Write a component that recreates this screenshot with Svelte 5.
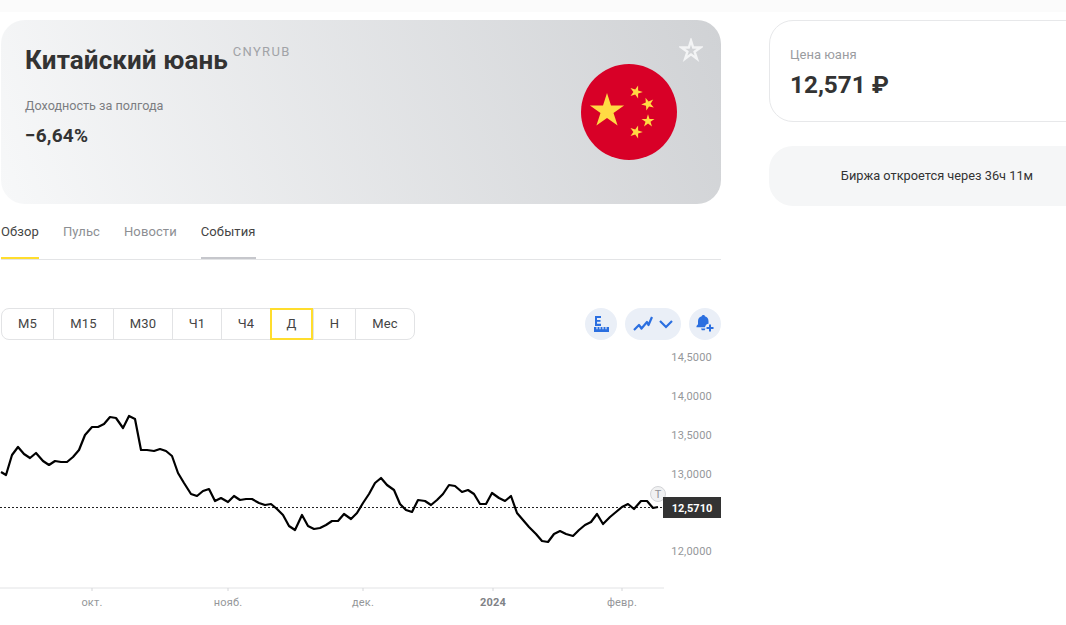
<script lang="ts">
  const tabs = [
    { label: 'Обзор', state: 'active' },
    { label: 'Пульс', state: '' },
    { label: 'Новости', state: '' },
    { label: 'События', state: 'seen' }
  ];

  const periods = [
    { label: 'М5', width: 51 },
    { label: 'М15', width: 60 },
    { label: 'М30', width: 59 },
    { label: 'Ч1', width: 49 },
    { label: 'Ч4', width: 49 },
    { label: 'Д', width: 43 },
    { label: 'Н', width: 42 },
    { label: 'Мес', width: 59 }
  ];

  const priceTicks = [
    { label: '14,5000', y: 357 },
    { label: '14,0000', y: 396 },
    { label: '13,5000', y: 435 },
    { label: '13,0000', y: 474 },
    { label: '12,0000', y: 551 }
  ];

  const dateTicks = [
    { label: 'окт.', x: 92, bold: false },
    { label: 'нояб.', x: 228, bold: false },
    { label: 'дек.', x: 363, bold: false },
    { label: '2024', x: 493, bold: true },
    { label: 'февр.', x: 622, bold: false }
  ];

  // price line, in page pixels
  const line =
    '1,472 6,475 12,455 18,447 24,454 30,458 36,453 43,461 49,465 55,461 61,462 67,462 73,457 79,450 85,435 92,427 98,427 104,424 110,417 116,418 123,428 129,416 135,419 141,450 147,450 154,451 160,449 166,451 172,456 178,473 184,483 191,494 197,496 203,491 209,489 215,501 221,498 228,502 234,496 240,500 246,499 252,499 259,503 265,505 271,504 277,509 283,515 289,526 295,530 302,515 308,526 314,529 320,528 326,525 332,521 338,521 344,514 351,519 357,513 363,503 369,494 375,483 381,478 387,485 394,490 400,504 406,510 412,512 418,500 425,501 431,505 437,500 443,494 449,485 455,486 462,492 468,490 474,494 480,504 486,504 492,493 499,498 505,501 511,496 517,513 523,520 529,527 536,534 542,541 548,542 554,534 560,531 566,534 573,536 579,530 585,525 591,522 597,514 603,524 610,517 616,512 622,507 628,504 634,509 641,501 647,501 653,508 658,507';

  function star(cx: number, cy: number, r: number, rot = 0) {
    const pts = [];
    for (let i = 0; i < 10; i++) {
      const rad = i % 2 ? r * 0.382 : r;
      const a = ((-90 + rot + i * 36) * Math.PI) / 180;
      pts.push(`${(cx + rad * Math.cos(a)).toFixed(1)},${(cy + rad * Math.sin(a)).toFixed(1)}`);
    }
    return pts.join(' ');
  }
</script>

<div class="topbar"></div>

<main class="page">
  <section class="left">
    <header class="hero">
      <div class="hero-text">
        <h1>Китайский юань<sup>CNYRUB</sup></h1>
        <div class="yield-label">Доходность за полгода</div>
        <div class="yield-value">−6,64%</div>
      </div>
      <svg class="flag" width="96" height="96" viewBox="581 64 96 96" aria-hidden="true">
        <circle cx="629" cy="112" r="48" fill="#d80027" />
        <polygon points={star(607, 111, 18)} fill="#ffda44" />
        <polygon points={star(636, 92, 6.8, 18)} fill="#ffda44" />
        <polygon points={star(648, 104, 6.8, 50)} fill="#ffda44" />
        <polygon points={star(648, 121, 6.8, 0)} fill="#ffda44" />
        <polygon points={star(636, 132, 6.8, 18)} fill="#ffda44" />
      </svg>
      <svg class="fav" width="24" height="24" viewBox="0 0 24 24" aria-hidden="true">
        <polygon points={star(12, 12.6, 10)} fill="none" stroke="#f3f4f5" stroke-width="2.4" stroke-linejoin="miter" />
      </svg>
    </header>

    <nav class="tabs">
      {#each tabs as tab}
        <span class="tab {tab.state}">{tab.label}</span>
      {/each}
    </nav>

    <div class="toolbar">
      <div class="periods">
        {#each periods as p}
          <button class="period" class:selected={p.label === 'Д'} style="width: {p.width}px">{p.label}</button>
        {/each}
      </div>
      <div class="tools">
        <button class="tool" aria-label="Масштаб">
          <svg width="20" height="20" viewBox="0 0 20 20">
            <path d="M4 2h6v2H6v2h3.500v1.700H6v2h4V12H4z" fill="#2b6fe0" />
            <path d="M3 13h15v5H3z" fill="#2b6fe0" />
            <path d="M6 13v2.200M9 13v2.200M12 13v2.200M15 13v2.200" stroke="#eaeff7" stroke-width="1.100" />
          </svg>
        </button>
        <button class="tool wide" aria-label="Тип графика">
          <svg width="20" height="20" viewBox="0 0 20 20" fill="none">
            <path d="M1 16l5-5 2.500 3.500L14 8l1.500 3L19 3" stroke="#2b6fe0" stroke-width="2.200" stroke-linejoin="round" />
          </svg>
          <svg width="14" height="10" viewBox="0 0 14 10" fill="none">
            <path d="M1 2l6 6 6-6" stroke="#2b6fe0" stroke-width="2.200" />
          </svg>
        </button>
        <button class="tool" aria-label="Уведомление">
          <svg width="20" height="20" viewBox="0 0 20 20">
            <path d="M8.500 1c.8 0 1.300.5 1.400 1.200 2.400.6 3.600 2.600 3.600 5v2.500c-1.800.2-3.300 1.600-3.500 3.500H1.500v-1.300L3 10.200v-3c0-2.400 1.200-4.400 3.700-5C6.800 1.500 7.700 1 8.500 1z" fill="#2b6fe0" />
            <path d="M6 14.500h4.500l-.8 1.800H6.800z" fill="#2b6fe0" />
            <path d="M15 10.500v7M11.500 14h7" stroke="#2b6fe0" stroke-width="2" />
          </svg>
        </button>
      </div>
    </div>

    <svg class="chart" width="721" height="285" viewBox="0 340 721 285">
      {#each priceTicks as t}
        <text class="price" x="712" y={t.y + 4} text-anchor="end">{t.label}</text>
      {/each}

      <line x1="0" y1="588" x2="664" y2="588" stroke="#e2e3e5" />
      {#each dateTicks as t}
        <line x1={t.x} y1="588" x2={t.x} y2="591" stroke="#d5d6d9" />
        <text class="date" class:bold={t.bold} x={t.x} y="606" text-anchor="middle">{t.label}</text>
      {/each}

      <line x1="0" y1="507.500" x2="663" y2="507.500" stroke="#222" stroke-dasharray="2 2" />
      <polyline points={line} fill="none" stroke="#000" stroke-width="2.200" stroke-linejoin="round" />

      <circle cx="658" cy="494" r="7.500" fill="#f0f1f2" stroke="#d3d4d7" />
      <text class="marker" x="658" y="498" text-anchor="middle">T</text>

      <rect x="663" y="497" width="58" height="21" fill="#333" />
      <text class="current" x="692" y="511.500" text-anchor="middle">12,5710</text>
    </svg>
  </section>

  <aside class="right">
    <div class="price-card">
      <div class="price-label">Цена юаня</div>
      <div class="price-value">12,571 ₽</div>
    </div>
    <div class="exchange">Биржа откроется через 36ч 11м</div>
  </aside>
</main>

<style>
  :global(body) {
    margin: 0;
    background: #fff;
    overflow: hidden;
  }

  .topbar {
    height: 12px;
    background: #fbfbfb;
  }

  .page {
    display: flex;
    gap: 48px;
    width: 1065px;
    overflow: hidden;
    padding: 8px 0 0 1px;
    font-family: Roboto, "Liberation Sans", sans-serif;
    color: #333;
  }

  .left {
    width: 720px;
    flex: none;
  }

  .hero {
    position: relative;
    display: flex;
    justify-content: space-between;
    height: 184px;
    box-sizing: border-box;
    padding: 25px 44px 0 24px;
    border-radius: 24px;
    background: linear-gradient(70deg, #f7f8f9 0%, #d0d2d5 100%);
  }

  h1 {
    margin: 0;
    font-size: 26px;
    line-height: 30px;
    font-weight: 700;
    letter-spacing: 0.1px;
    color: #333;
  }

  sup {
    position: relative;
    top: -3px;
    margin-left: 5px;
    font-size: 13px;
    line-height: 0;
    font-weight: 400;
    letter-spacing: 1.300px;
    color: #a1a3a7;
    vertical-align: super;
  }

  .yield-label {
    margin-top: 23px;
    font-size: 12.600px;
    line-height: 16px;
    color: #7b7d81;
  }

  .yield-value {
    margin-top: 11px;
    font-size: 19px;
    line-height: 22px;
    font-weight: 700;
    letter-spacing: 0.2px;
    color: #333;
  }

  .flag {
    margin-top: 19px;
  }

  .fav {
    position: absolute;
    top: 18px;
    right: 18px;
  }

  .tabs {
    display: flex;
    gap: 24px;
    height: 55px;
    border-bottom: 1px solid #e3e4e6;
  }

  .tab {
    height: 55px;
    box-sizing: border-box;
    padding-top: 20px;
    font-size: 13px;
    line-height: 16px;
    letter-spacing: 0.1px;
    color: #8d8f93;
    border-bottom: 2px solid transparent;
  }

  .tab.active {
    color: #444;
    border-bottom-color: #ffdd2d;
  }

  .tab.seen {
    color: #444;
    border-bottom-color: #c6c7cc;
  }

  .toolbar {
    display: flex;
    justify-content: space-between;
    margin-top: 48px;
    height: 32px;
  }

  .periods {
    display: flex;
    border: 1px solid #e2e3e5;
    border-radius: 8px;
    box-sizing: border-box;
    height: 32px;
  }

  .period {
    height: 30px;
    padding: 0 0 1px;
    border: 0;
    border-left: 1px solid #e2e3e5;
    background: none;
    font: 13px Roboto, "Liberation Sans", sans-serif;
    letter-spacing: 0.2px;
    color: #444;
  }

  .period:first-child {
    border-left: 0;
  }

  .period.selected {
    height: 32px;
    margin-top: -1px;
    border: 2px solid #ffdd2d;
    box-sizing: border-box;
  }

  .tools {
    display: flex;
    gap: 8px;
  }

  .tool {
    display: flex;
    align-items: center;
    justify-content: center;
    gap: 6px;
    width: 32px;
    height: 32px;
    padding: 0;
    border: 0;
    border-radius: 16px;
    background: #eaeff7;
  }

  .tool.wide {
    width: 56px;
  }

  .chart {
    display: block;
    margin-left: -1px;
  }

  .price,
  .date {
    font-size: 11px;
    letter-spacing: 0.2px;
    fill: #95979a;
  }

  .date.bold {
    font-weight: 700;
    fill: #808286;
  }

  .marker {
    font-size: 11px;
    fill: #909296;
  }

  .current {
    font-size: 11px;
    font-weight: 700;
    fill: #fff;
  }

  .right {
    display: flex;
    flex-direction: column;
    gap: 24px;
    width: 336px;
    flex: none;
  }

  .price-card {
    height: 102px;
    box-sizing: border-box;
    padding: 26px 20px 0;
    border: 1px solid #e7e8ea;
    border-radius: 24px;
  }

  .price-label {
    font-size: 13px;
    line-height: 16px;
    color: #9a9c9f;
  }

  .price-value {
    margin-top: 7px;
    font-size: 24.300px;
    line-height: 30px;
    font-weight: 700;
    color: #333;
  }

  .exchange {
    height: 60px;
    box-sizing: border-box;
    padding-bottom: 1px;
    display: flex;
    align-items: center;
    justify-content: center;
    border-radius: 24px;
    background: #f5f6f7;
    font-size: 12.800px;
    color: #333;
  }
</style>
